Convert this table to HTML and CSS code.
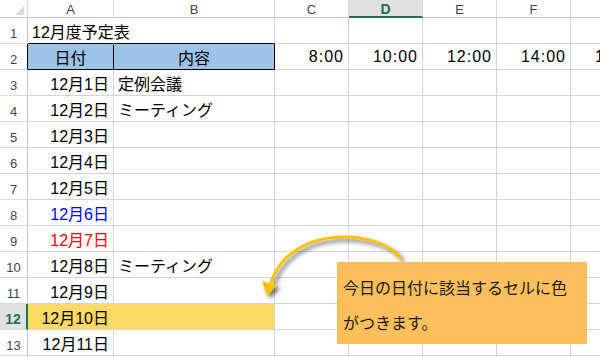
FILE: index.html
```html
<!DOCTYPE html>
<html lang="ja">
<head>
<meta charset="utf-8">
<title>12月度予定表</title>
<link rel="stylesheet" href="styles.css">
</head>
<body>
<div class="page">
  <div class="sheet">
    <!-- header row -->
    <div class="c h corner"><svg width="27" height="17" viewBox="0 0 27 17"><polygon points="15,15 24,15 24,6" fill="#dcdcdc"/></svg></div>
    <div class="c h">A</div>
    <div class="c h">B</div>
    <div class="c h">C</div>
    <div class="c h sel-col">D</div>
    <div class="c h">E</div>
    <div class="c h">F</div>
    <div class="c h">G</div>

    <!-- row 1 -->
    <div class="c rh">1</div>
    <div class="c l title bb-black">12月度予定表</div>
    <div class="c bb-black"></div>
    <div class="c"></div><div class="c"></div><div class="c"></div><div class="c"></div><div class="c"></div>

    <!-- row 2 -->
    <div class="c rh br-black">2</div>
    <div class="c ctr blue box">日付</div>
    <div class="c ctr blue box">内容</div>
    <div class="c r time">8:00</div>
    <div class="c r time">10:00</div>
    <div class="c r time">12:00</div>
    <div class="c r time">14:00</div>
    <div class="c r time">16:00</div>

    <!-- row 3 -->
    <div class="c rh">3</div>
    <div class="c r">12月1日</div>
    <div class="c l">定例会議</div>
    <div class="c"></div><div class="c"></div><div class="c"></div><div class="c"></div><div class="c"></div>

    <!-- row 4 -->
    <div class="c rh">4</div>
    <div class="c r">12月2日</div>
    <div class="c l">ミーティング</div>
    <div class="c"></div><div class="c"></div><div class="c"></div><div class="c"></div><div class="c"></div>

    <!-- row 5 -->
    <div class="c rh">5</div>
    <div class="c r">12月3日</div>
    <div class="c"></div>
    <div class="c"></div><div class="c"></div><div class="c"></div><div class="c"></div><div class="c"></div>

    <!-- row 6 -->
    <div class="c rh">6</div>
    <div class="c r">12月4日</div>
    <div class="c"></div>
    <div class="c"></div><div class="c"></div><div class="c"></div><div class="c"></div><div class="c"></div>

    <!-- row 7 -->
    <div class="c rh">7</div>
    <div class="c r">12月5日</div>
    <div class="c"></div>
    <div class="c"></div><div class="c"></div><div class="c"></div><div class="c"></div><div class="c"></div>

    <!-- row 8 -->
    <div class="c rh">8</div>
    <div class="c r sat">12月6日</div>
    <div class="c"></div>
    <div class="c"></div><div class="c"></div><div class="c"></div><div class="c"></div><div class="c"></div>

    <!-- row 9 -->
    <div class="c rh">9</div>
    <div class="c r sun">12月7日</div>
    <div class="c"></div>
    <div class="c"></div><div class="c"></div><div class="c"></div><div class="c"></div><div class="c"></div>

    <!-- row 10 -->
    <div class="c rh">10</div>
    <div class="c r">12月8日</div>
    <div class="c l">ミーティング</div>
    <div class="c"></div><div class="c"></div><div class="c"></div><div class="c"></div><div class="c"></div>

    <!-- row 11 -->
    <div class="c rh">11</div>
    <div class="c r">12月9日</div>
    <div class="c"></div>
    <div class="c"></div><div class="c"></div><div class="c"></div><div class="c"></div><div class="c"></div>

    <!-- row 12 -->
    <div class="c rh sel-row">12</div>
    <div class="c r today today-a">12月10日</div>
    <div class="c today"></div>
    <div class="c"></div><div class="c"></div><div class="c"></div><div class="c"></div><div class="c"></div>

    <!-- row 13 -->
    <div class="c rh">13</div>
    <div class="c r">12月11日</div>
    <div class="c"></div>
    <div class="c"></div><div class="c"></div><div class="c"></div><div class="c"></div><div class="c"></div>

    <!-- row 14 (only its top edge is in view) -->
    <div class="c rh"></div>
    <div class="c"></div>
    <div class="c"></div>
    <div class="c"></div><div class="c"></div><div class="c"></div><div class="c"></div><div class="c"></div>
  </div>

  <svg class="arrow" width="600" height="357" viewBox="0 0 600 357">
    <defs>
      <filter id="sh" x="-20%" y="-20%" width="140%" height="140%">
        <feDropShadow dx="3" dy="3" stdDeviation="2" flood-color="#333" flood-opacity="0.7"/>
      </filter>
    </defs>
    <g filter="url(#sh)">
      <path d="M401,259 C383,230 290,222 271,283" fill="none" stroke="#FFC000" stroke-width="3"/>
      <polygon points="262,281 277,285 267,296" fill="#FFC000"/>
    </g>
  </svg>

  <div class="callout">
    <p class="callout-text">今日の日付に該当するセルに色<br>がつきます。</p>
  </div>
</div>
</body>
</html>
```

FILE: styles.css
```css
html, body {
  margin: 0;
  padding: 0;
  background: #ffffff;
}

body {
  width: 600px;
  height: 357px;
  overflow: hidden;
  font-family: "Liberation Sans", "Noto Sans CJK JP", sans-serif;
}

.page {
  position: relative;
  width: 600px;
  height: 357px;
  overflow: hidden;
}

.sheet {
  display: grid;
  grid-template-columns: 28px 86px 161px 74px 74px 74px 74px 74px;
  grid-template-rows: 18px repeat(14, 26px);
  width: 645px;
}

.c {
  box-sizing: border-box;
  border-right: 1px solid #d4d4d4;
  border-bottom: 1px solid #d4d4d4;
  display: flex;
  align-items: center;
  padding: 0 4px;
  font-size: 16px;
  color: #000;
  white-space: nowrap;
  min-width: 0;
}

.h {
  justify-content: center;
  font-size: 13px;
  color: #444;
  padding: 0;
  padding-top: 2px;
  border-right-color: #dadada;
  border-bottom-color: #c8c8c8;
}

.corner {
  padding: 0;
  align-items: stretch;
}

.sel-col {
  background: #e1e1e1;
  color: #217346;
  font-weight: bold;
  font-size: 14px;
  border-bottom: 2px solid #217346;
}

.rh {
  justify-content: center;
  align-items: flex-end;
  padding: 0 0 2px 0;
  font-size: 13px;
  color: #444;
  border-right-color: #c8c8c8;
  border-bottom-color: #dadada;
}

.sel-row {
  background: #e1e1e1;
  color: #217346;
  font-weight: bold;
  font-size: 14px;
  border-right: 2px solid #217346;
}

.l { justify-content: flex-start; }
.r { justify-content: flex-end; }
.ctr { justify-content: center; }

.title {
  border-right-color: transparent;
}

.time {
  letter-spacing: 1px;
}

.blue {
  background: #9dc3e6;
}

.box {
  border-right-color: #000;
  border-bottom-color: #000;
}

.bb-black {
  border-bottom-color: #000;
}

.br-black {
  border-right-color: #000;
}

.sat { color: #0000ff; }
.sun { color: #ff0000; }

.today {
  background: #ffd966;
}

.today-a {
  border-right-color: #ffd966;
}

.arrow {
  position: absolute;
  left: 0;
  top: 0;
  pointer-events: none;
}

.callout {
  position: absolute;
  left: 337px;
  top: 262px;
  width: 250px;
  height: 82px;
  background: #fdbf5b;
  box-sizing: border-box;
  padding: 8px 0 0 6px;
}

.callout-text {
  margin: 0;
  font-family: "Noto Sans CJK JP", sans-serif;
  font-size: 16px;
  line-height: 35px;
  color: #1a1a1a;
}
```
